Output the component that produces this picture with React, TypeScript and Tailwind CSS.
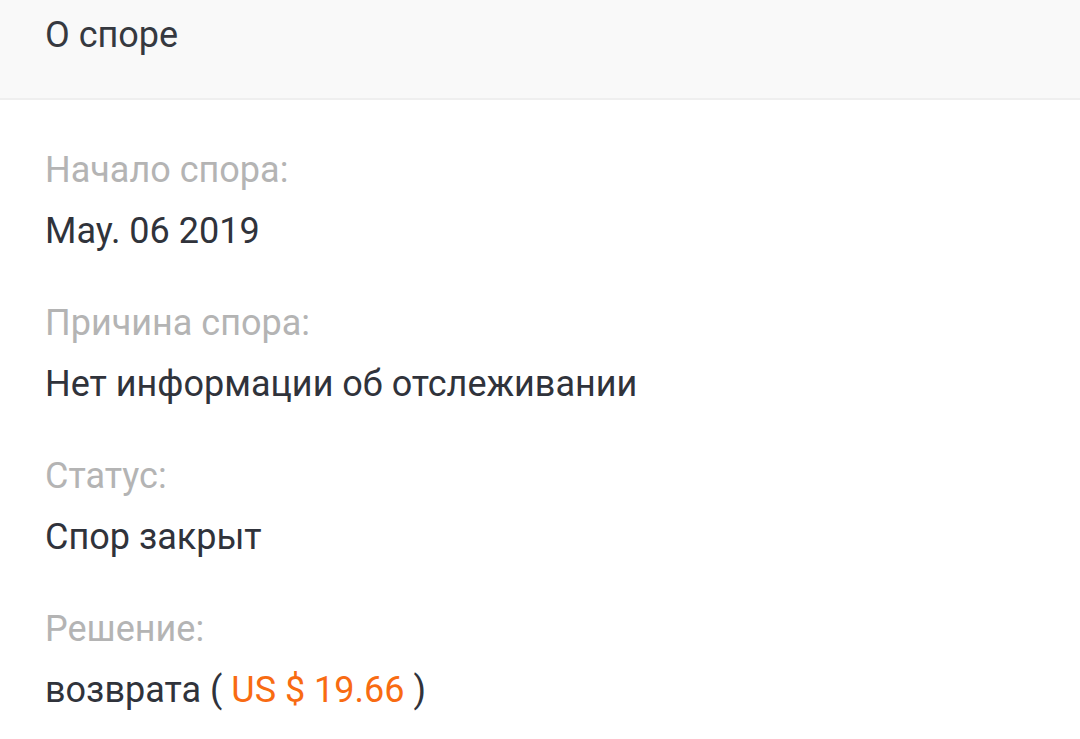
const rows = [
  { label: 'Начало спора:', value: 'May. 06 2019' },
  { label: 'Причина спора:', value: 'Нет информации об отслеживании' },
  { label: 'Статус:', value: 'Спор закрыт' },
];

export default function App() {
  return (
    <div className="min-h-screen bg-white font-['Roboto',sans-serif]">
      {/* Header */}
      <div className="h-[100px] bg-[#f9f9f9] border-b-2 border-[#efefef] pl-[45px] pt-[14px]">
        <h1 className="text-[36px] leading-[42px] text-[#363940]">О споре</h1>
      </div>

      {/* Details */}
      <div className="pl-[45px] pt-[49px] flex flex-col gap-[50px]">
        {rows.map((row, i) => (
          <div key={i} className="flex flex-col gap-[19px]">
            <div className="text-[36px] leading-[42px] text-[#b4b4b4]">{row.label}</div>
            <div className="text-[36px] leading-[42px] text-[#30333b]">{row.value}</div>
          </div>
        ))}
        <div className="flex flex-col gap-[19px]">
          <div className="text-[36px] leading-[42px] text-[#b4b4b4]">Решение:</div>
          <div className="text-[36px] leading-[42px] text-[#30333b]">
            возврата ( <span className="text-[#f86b12]">US $ 19.66</span> )
          </div>
        </div>
      </div>
    </div>
  );
}
